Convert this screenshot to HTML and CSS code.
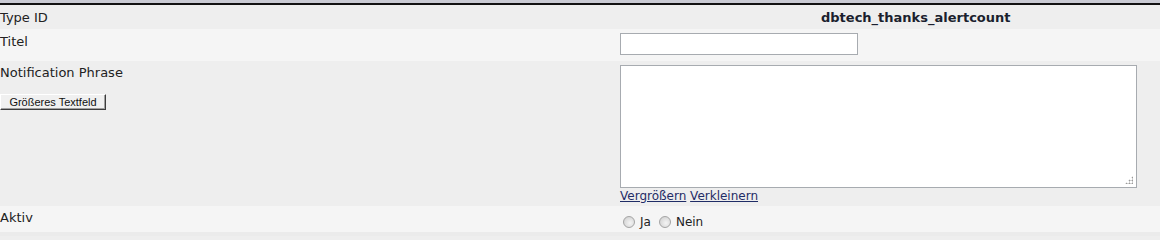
FILE: index.html
```html
<!DOCTYPE html>
<html lang="de">
<head>
<meta charset="utf-8">
<title>Notification Type</title>
<link rel="stylesheet" href="styles.css">
</head>
<body>
<div class="topbar"></div>
<div class="form">
  <div class="row alt1 r-type">
    <div class="label">Type ID</div>
    <div class="value"><span class="typeid">dbtech_thanks_alertcount</span></div>
  </div>
  <div class="row alt2 r-title">
    <div class="label">Titel</div>
    <div class="value"><input type="text" class="textinput"></div>
  </div>
  <div class="row alt1 r-phrase">
    <div class="label">
      <div>Notification Phrase</div>
      <button class="btn" type="button">Größeres Textfeld</button>
    </div>
    <div class="value">
      <div class="ta-wrap">
        <textarea class="textarea"></textarea>
        <span class="grip"></span>
      </div>
      <div class="links"><a href="#">Vergrößern</a> <a href="#">Verkleinern</a></div>
    </div>
  </div>
  <div class="row alt2 r-active">
    <div class="label">Aktiv</div>
    <div class="value radios">
      <label class="opt"><span class="radio"></span>Ja</label>
      <label class="opt"><span class="radio"></span>Nein</label>
    </div>
  </div>
  <div class="bottom"></div>
</div>
</body>
</html>
```

FILE: styles.css
```css
html, body {
  margin: 0;
  padding: 0;
  background: #eeeeee;
}
body {
  font-family: "DejaVu Sans", Verdana, sans-serif;
  font-size: 13px;
  color: #222222;
  width: 1160px;
  height: 236px;
  overflow: hidden;
}
.topbar {
  height: 3px;
  background: #c9cad3;
  border-bottom: 2px solid #111111;
}
.row {
  display: grid;
  grid-template-columns: 620px 1fr;
}
.alt1 { background: #eeeeee; }
.alt2 { background: #f5f5f5; }
.label {
  line-height: 16px;
}
.r-type { height: 24px; }
.r-type .label { padding-top: 5px; }
.r-type .value { padding-top: 5px; padding-left: 201px; }
.typeid {
  font-weight: bold;
  font-size: 13px;
  color: #1b1f2e;
  line-height: 16px;
}
.r-title { height: 32px; }
.r-title .label { padding-top: 5px; }
.textinput {
  display: block;
  box-sizing: border-box;
  width: 238px;
  height: 22px;
  margin: 4px 0 0 0;
  border: 1px solid #a7abb0;
  background: #ffffff;
  padding: 0 3px;
}
.r-phrase { height: 145px; }
.r-phrase .label { padding-top: 4px; }
.btn {
  display: block;
  box-sizing: border-box;
  margin: 13px 0 0 0;
  width: 106px;
  height: 16px;
  padding: 0;
  font-family: "Liberation Sans", Arial, sans-serif;
  font-size: 11px;
  line-height: 13px;
  color: #111111;
  background: #f0f0f0;
  border: 1px solid;
  border-color: #ffffff #3c3c3c #3c3c3c #ffffff;
  box-shadow: inset -1px -1px 0 #a0a0a0;
}
.ta-wrap {
  position: relative;
  width: 517px;
  height: 123px;
  margin-top: 4px;
}
.textarea {
  display: block;
  box-sizing: border-box;
  width: 517px;
  height: 123px;
  margin: 0;
  border: 1px solid #a7abb0;
  background: #ffffff;
  resize: none;
}
.grip {
  position: absolute;
  right: 4px;
  bottom: 4px;
  width: 8px;
  height: 8px;
  background:
    radial-gradient(circle, #9a9a9a 0.9px, transparent 1.1px) 0 0 / 3px 3px;
  clip-path: polygon(100% 0, 100% 100%, 0 100%);
}
.links {
  font-size: 12px;
  line-height: 15px;
  margin-top: 1px;
}
.links a {
  color: #1f2c66;
  text-decoration: underline;
}
.r-active { height: 26px; }
.r-active .label { padding-top: 4px; }
.radios {
  display: flex;
  align-items: center;
  padding-left: 3px;
  padding-top: 5px;
  font-size: 12px;
  color: #222222;
}
.opt {
  display: flex;
  align-items: center;
  margin-right: 8px;
}
.radio {
  display: inline-block;
  box-sizing: border-box;
  width: 12px;
  height: 12px;
  border-radius: 50%;
  border: 1px solid #a4a4a4;
  background: radial-gradient(circle at 60% 60%, #f4f4f4 0, #dcdcdc 60%, #c8c8c8 100%);
  margin-right: 5px;
}
.bottom {
  height: 4px;
  background: #ebebeb;
}
```
